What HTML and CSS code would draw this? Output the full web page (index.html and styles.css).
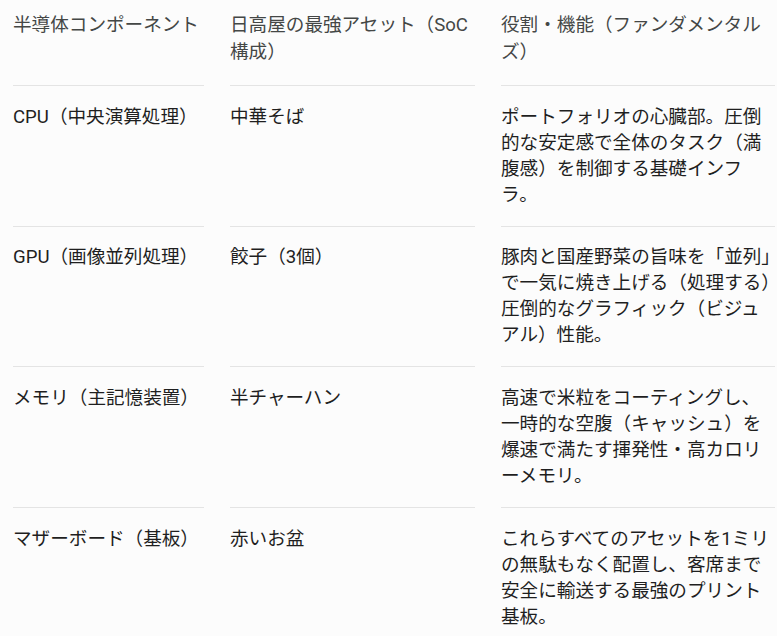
FILE: index.html
```html
<!DOCTYPE html>
<html lang="ja">
<head>
<meta charset="utf-8">
<link rel="stylesheet" href="styles.css">
</head>
<body>
<div class="table" role="table">
  <div class="cell head">半導体コンポーネント</div>
  <div class="cell head">日高屋の最強アセット（SoC構成）</div>
  <div class="cell head">役割・機能（ファンダメンタルズ）</div>

  <div class="cell">CPU（中央演算処理）</div>
  <div class="cell">中華そば</div>
  <div class="cell">ポートフォリオの心臓部。圧倒的な安定感で全体のタスク（満腹感）を制御する基礎インフラ。</div>

  <div class="cell">GPU（画像並列処理）</div>
  <div class="cell">餃子（3個）</div>
  <div class="cell">豚肉と国産野菜の旨味を「並列」で一気に焼き上げる（処理する）圧倒的なグラフィック（ビジュアル）性能。</div>

  <div class="cell">メモリ（主記憶装置）</div>
  <div class="cell">半チャーハン</div>
  <div class="cell">高速で米粒をコーティングし、一時的な空腹（キャッシュ）を爆速で満たす揮発性・高カロリーメモリ。</div>

  <div class="cell">マザーボード（基板）</div>
  <div class="cell">赤いお盆</div>
  <div class="cell">これらすべてのアセットを1ミリの無駄もなく配置し、客席まで安全に輸送する最強のプリント基板。</div>
</div>
</body>
</html>
```
FILE: styles.css
```css
html, body {
  margin: 0;
  padding: 0;
  background: #fcfcfc;
}
body {
  font-family: "Roboto", "Noto Sans CJK JP", sans-serif;
  font-size: 18.6px;
  line-height: 26px;
  color: #1f1f1f;
  overflow: hidden;
}
.table {
  display: grid;
  grid-template-columns: 191px 245px 274px;
  column-gap: 26px;
  padding-left: 13px;
}
.cell {
  padding: 17.8px 0;
  border-bottom: 1px solid #e4e4e4;
}
.cell.head {
  color: #444746;
  padding-top: 12px;
  padding-bottom: 19px;
  line-height: 27px;
}
```
